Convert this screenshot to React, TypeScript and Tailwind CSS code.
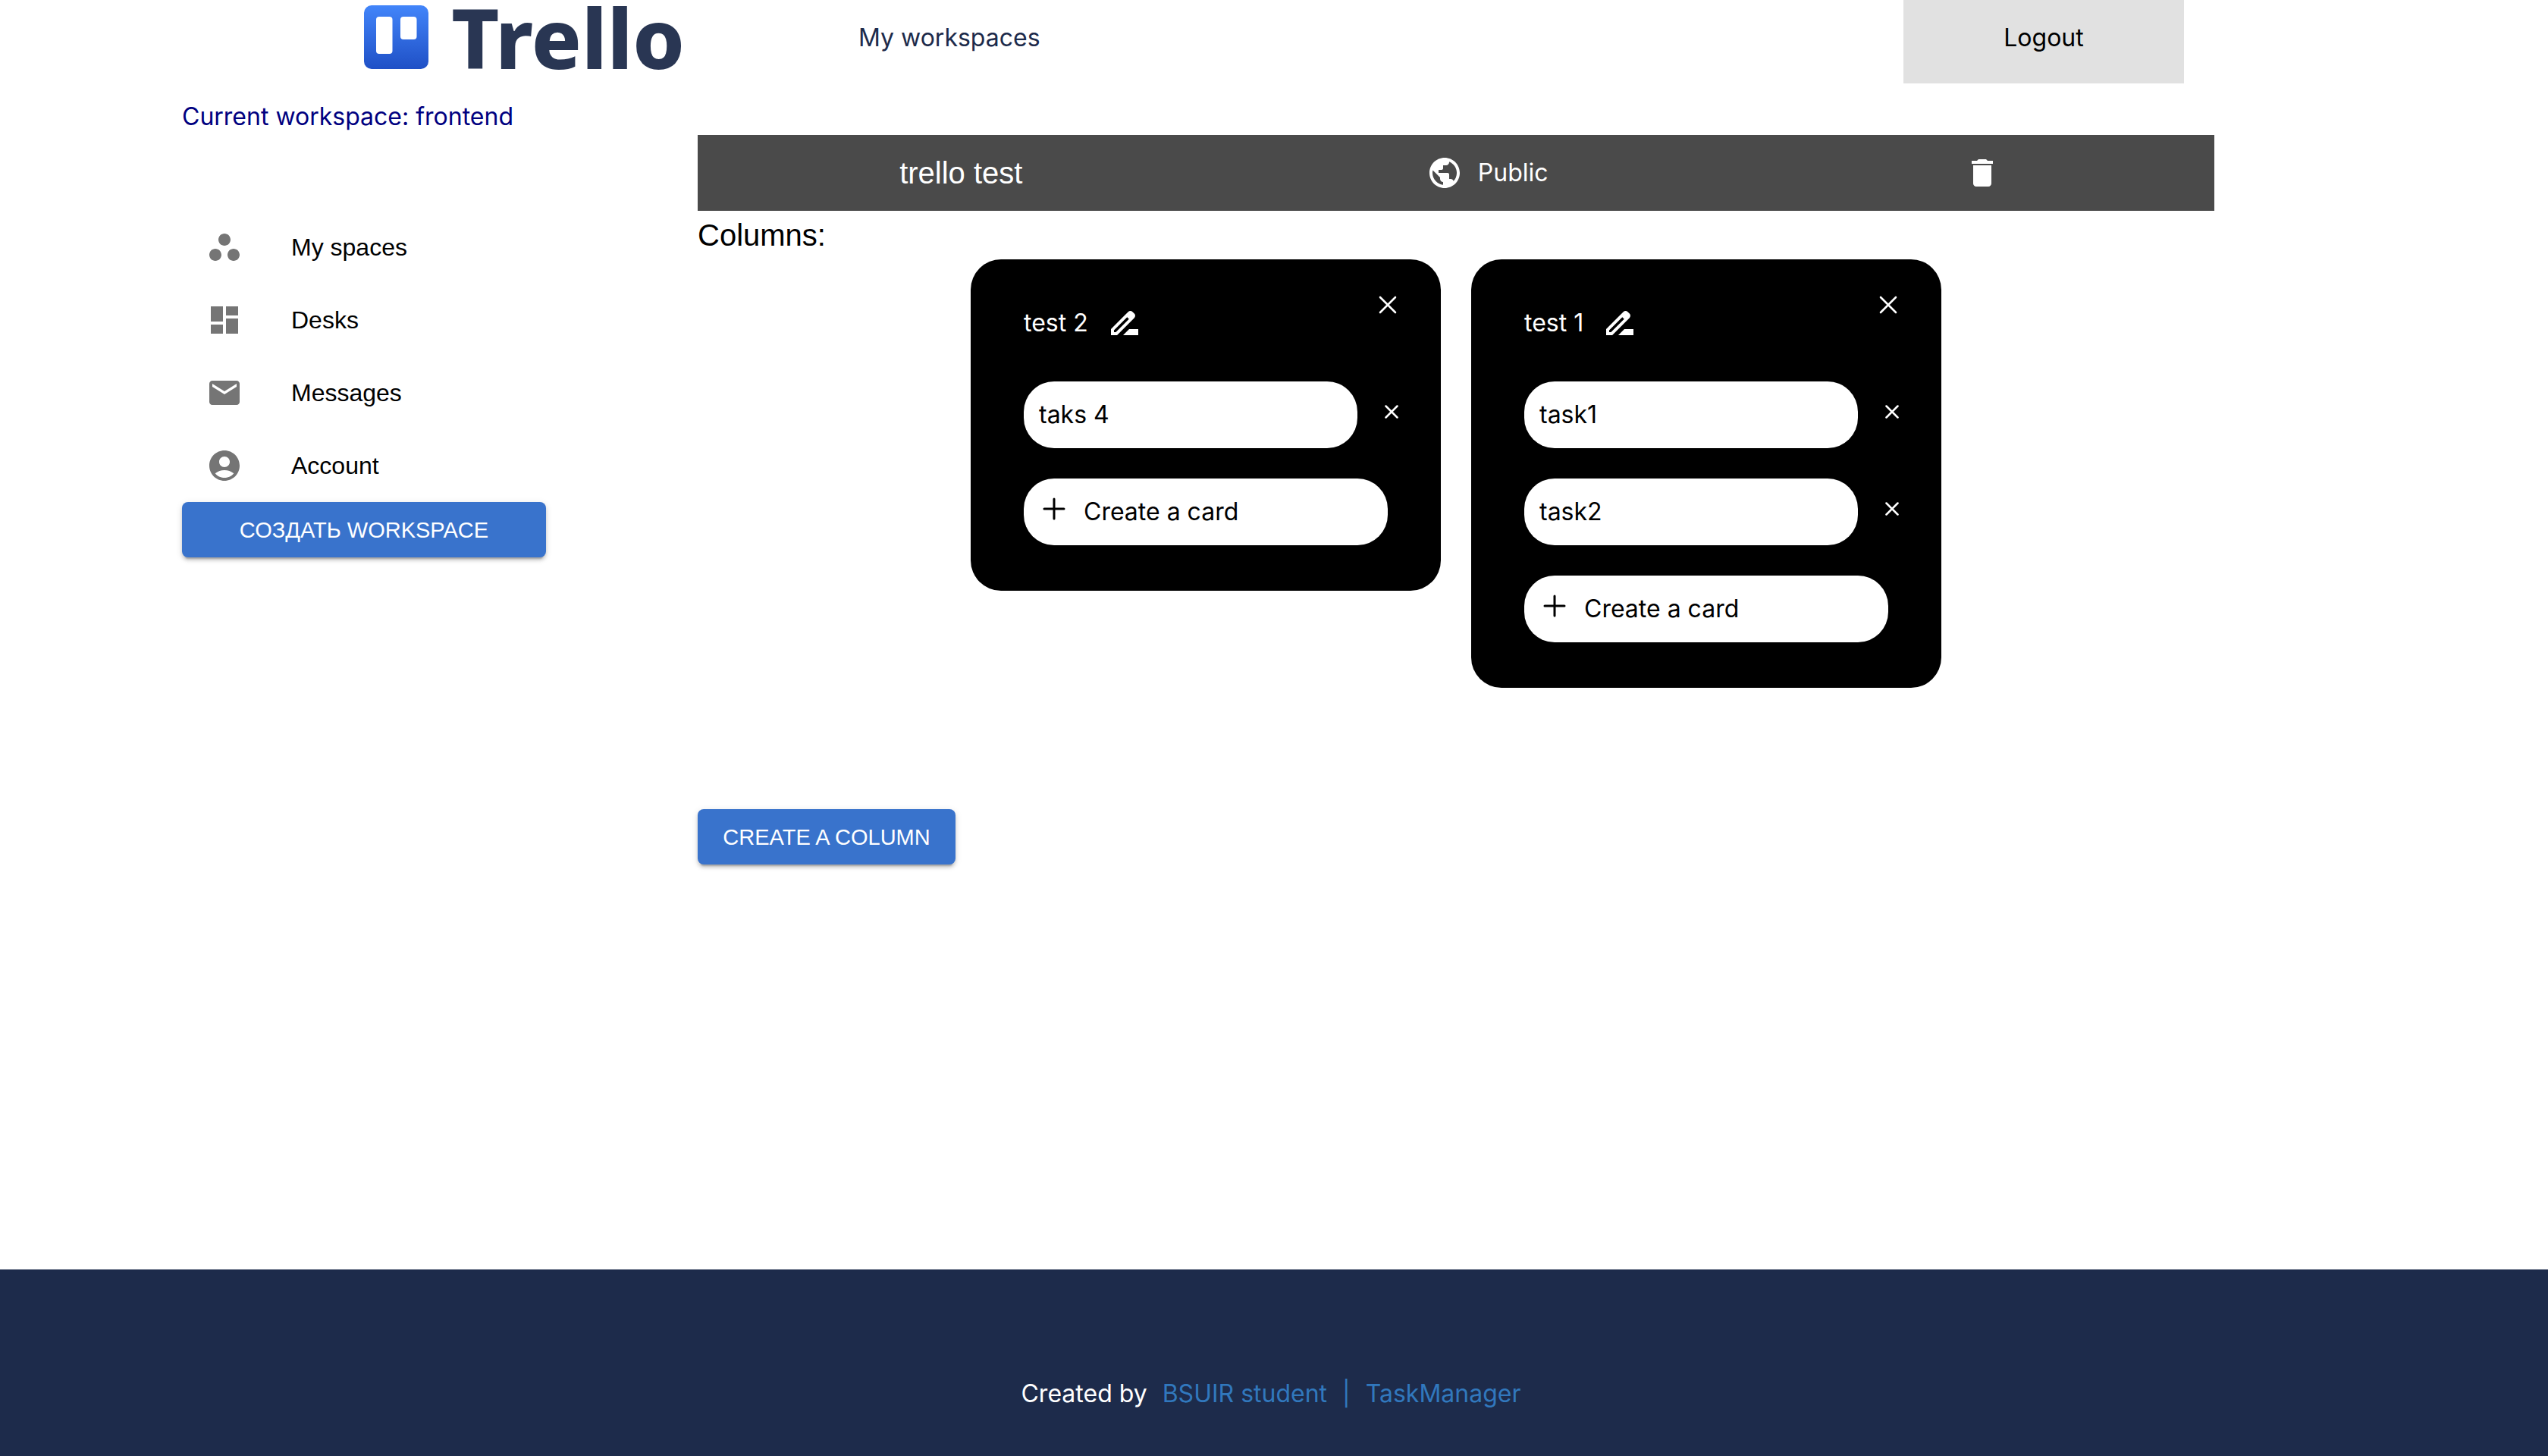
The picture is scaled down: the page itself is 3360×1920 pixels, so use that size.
import type { ReactNode } from "react";
import {
  MdAccountCircle,
  MdDashboard,
  MdDelete,
  MdDriveFileRenameOutline,
  MdEmail,
  MdPublic,
  MdWorkspaces,
} from "react-icons/md";

const menu = [
  { label: "My spaces", Icon: MdWorkspaces },
  { label: "Desks", Icon: MdDashboard },
  { label: "Messages", Icon: MdEmail },
  { label: "Account", Icon: MdAccountCircle },
];

const columns = [
  { title: "test 2", tasks: ["taks 4"] },
  { title: "test 1", tasks: ["task1", "task2"] },
];

function Cross({ className }: { className: string }) {
  return (
    <svg viewBox="0 0 24 24" className={className} fill="none" stroke="currentColor" strokeLinecap="round" aria-hidden="true">
      <path d="M2 2L22 22M22 2L2 22" />
    </svg>
  );
}

function Plus() {
  return (
    <svg viewBox="0 0 30 30" className="size-[30px]" fill="none" stroke="currentColor" strokeWidth="3" strokeLinecap="round" aria-hidden="true">
      <path d="M15 2V28M2 15H28" />
    </svg>
  );
}

function Logo() {
  return (
    <a href="#" className="flex w-[422px] shrink-0 items-start" aria-label="Trello">
      <svg viewBox="0 0 85 84" className="mt-[7px] h-[84px] w-[85px] shrink-0" aria-hidden="true">
        <defs>
          <linearGradient id="mark" x1="0" y1="0" x2="0" y2="1">
            <stop offset="0" stopColor="#4285fa" />
            <stop offset="1" stopColor="#1f50c6" />
          </linearGradient>
        </defs>
        <rect width="85" height="84" rx="10" fill="url(#mark)" />
        <rect x="16" y="15" width="21.5" height="49" rx="4" fill="#fff" />
        <rect x="48" y="15" width="21.5" height="30" rx="4" fill="#fff" />
      </svg>
      <span className="ml-[30px] font-['Noto_Sans',sans-serif] text-[109px] leading-[98px] font-extrabold text-[#293653]">
        Trello
      </span>
    </a>
  );
}

function MainButton({ children, className = "" }: { children: ReactNode; className?: string }) {
  return (
    <button
      type="button"
      className={`h-[73px] min-w-[340px] rounded-lg bg-[#3973cc] px-8 font-['Liberation_Sans',sans-serif] text-[29px] leading-[48px] whitespace-nowrap text-white uppercase shadow-[0_6px_2px_-4px_rgba(0,0,0,0.2),0_4px_4px_0_rgba(0,0,0,0.14),0_2px_10px_0_rgba(0,0,0,0.12)] ${className}`}
    >
      {children}
    </button>
  );
}

function Column({ title, tasks }: { title: string; tasks: string[] }) {
  return (
    <article className="w-[620px] rounded-[40px] bg-black pt-10 pr-[50px] pb-[60px] pl-[70px]">
      <div className="flex items-start justify-between text-white">
        <div className="flex items-center gap-6 pt-5">
          <h3>{title}</h3>
          <button type="button" aria-label={`Rename ${title}`}>
            <MdDriveFileRenameOutline className="size-12" />
          </button>
        </div>
        <button type="button" aria-label={`Delete ${title}`} className="flex size-10 items-center justify-center">
          <Cross className="size-6 stroke-[2.6]" />
        </button>
      </div>
      <ul className="mt-[53px] flex flex-col gap-10">
        {tasks.map((task) => (
          <li key={task} className="flex items-center justify-between">
            <div className="w-[440px] rounded-[40px] bg-white px-5 py-5">{task}</div>
            <button type="button" aria-label={`Delete ${task}`} className="flex w-[30px] justify-center pb-2 text-white">
              <Cross className="size-[18px] stroke-[3.4]" />
            </button>
          </li>
        ))}
        <li>
          <button type="button" className="flex w-[480px] items-center gap-6 rounded-[40px] bg-white px-[25px] py-5">
            <span className="pb-2">
              <Plus />
            </span>
            Create a card
          </button>
        </li>
      </ul>
    </article>
  );
}

export default function App() {
  return (
    <div className="flex min-h-screen flex-col bg-white font-['Inter',sans-serif] text-[32px] leading-[48px] text-black">
      <header className="px-[480px]">
        <div className="flex h-[110px] items-start">
          <Logo />
          <nav className="flex-1 pt-[26px] pl-[230px]">
            <a href="#" className="text-[#1d2b4b]">
              My workspaces
            </a>
          </nav>
          <button type="button" className="w-[370px] bg-[#e1e1e1] pt-[26px] pb-9">
            Logout
          </button>
        </div>
      </header>

      <main className="flex-1 px-60 pt-5">
        <p className="text-[#000080]">Current workspace: frontend</p>
        <div className="flex items-start">
          <aside className="w-[480px] shrink-0 pt-[100px] font-['Liberation_Sans',sans-serif]">
            <ul>
              {menu.map(({ label, Icon }) => (
                <li key={label}>
                  <a href="#" className="flex h-24 items-center gap-16 px-8">
                    <Icon className="size-12 text-[#757575]" />
                    {label}
                  </a>
                </li>
              ))}
            </ul>
            <MainButton className="w-full">Создать workspace</MainButton>
          </aside>

          <section className="mr-[200px] ml-[200px] flex-1">
            <div className="flex h-[100px] items-center justify-around bg-[#4a4a4a] text-white">
              <h1 className="font-['Liberation_Sans',sans-serif] text-[40px]">trello test</h1>
              <div className="flex items-center gap-5">
                <MdPublic className="size-12" />
                Public
              </div>
              <button type="button" aria-label="Delete board" className="p-4">
                <MdDelete className="size-12" />
              </button>
            </div>
            <h2 className="font-['Liberation_Sans',sans-serif] text-[40px] leading-[64px]">Columns:</h2>
            <div className="flex flex-wrap items-start justify-center gap-10">
              {columns.map((column) => (
                <Column key={column.title} {...column} />
              ))}
            </div>
            <MainButton className="mt-40">Create a column</MainButton>
          </section>
        </div>
      </main>

      <footer className="flex justify-center bg-[#1d2b4b] px-10 pt-[140px] pb-[58px] text-white">
        <p className="flex gap-5 pr-2">
          <span>Created by</span>
          <a href="#" className="text-[#3178bd]">
            BSUIR student
          </a>
          <span className="text-[#3178bd]">|</span>
          <a href="#" className="text-[#3178bd]">
            TaskManager
          </a>
        </p>
      </footer>
    </div>
  );
}
